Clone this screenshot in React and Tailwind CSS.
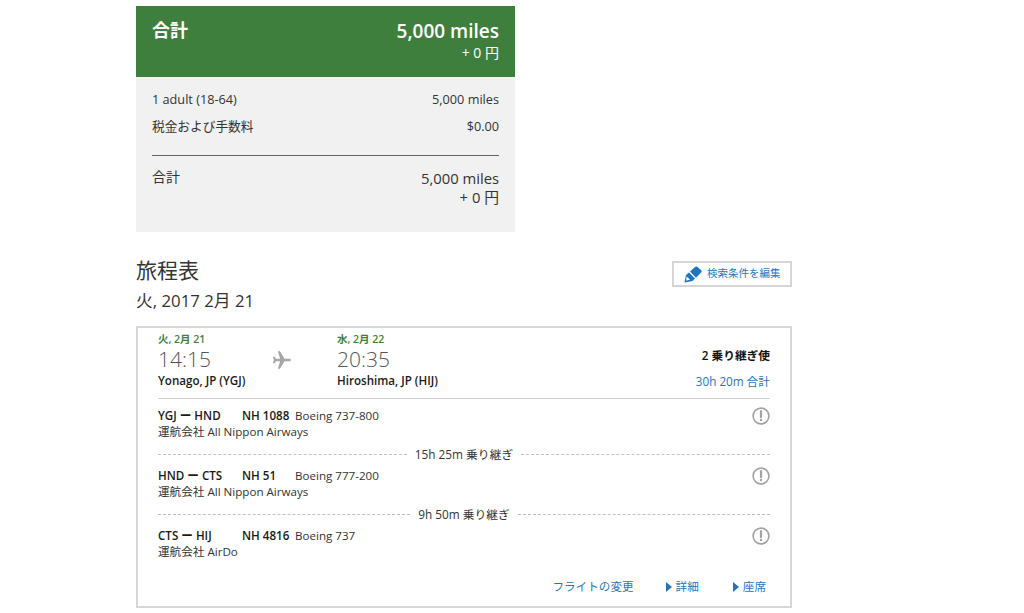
function Warn() {
  return (
    <svg width="18" height="18" viewBox="0 0 18 18" className="shrink-0">
      <circle cx="9" cy="9" r="7.9" fill="none" stroke="#a3a3a3" strokeWidth="1.6" />
      <path d="M9 4.2v6" stroke="#a3a3a3" strokeWidth="2.2" strokeLinecap="round" fill="none" />
      <circle cx="9" cy="13" r="1.2" fill="#a3a3a3" />
    </svg>
  );
}
function Segment({ route, flight, plane, op, className }) {
  return (
    <div className={"flex justify-between " + className}>
      <div className="text-[11.6px] leading-[17px] text-[#333]">
        <div className="flex">
          <span className="w-[84px] font-semibold text-[#1a1a1a]">{route}</span>
          <span className="w-[53px] font-semibold text-[#1a1a1a]">{flight}</span>
          <span>{plane}</span>
        </div>
        <div className="-mt-px">運航会社 {op}</div>
      </div>
      <Warn />
    </div>
  );
}
function Layover({ text, className }) {
  return (
    <div className={"flex items-center gap-2 text-[11.8px] leading-[16px] text-[#333] " + className}>
      <div className="flex-1 border-t border-dashed border-[#c0c0c0]" />
      <span>{text}</span>
      <div className="flex-1 border-t border-dashed border-[#c0c0c0]" />
    </div>
  );
}
function Tri() {
  return (
    <svg width="6" height="10" viewBox="0 0 6 10"><path d="M0 0l6 5-6 5z" fill="#1f76bd" /></svg>
  );
}
export default function App() {
  return (
    <div className="w-[1024px] h-[613px] overflow-hidden bg-white pl-[136px] pt-[6px] font-['Open_Sans','Noto_Sans_CJK_JP',sans-serif]">
      <div className="w-[379px] text-[#333]">
        <div className="flex h-[71px] justify-between bg-[#3f7f3d] px-4 pt-[12px] text-white">
          <div className="text-[18px] leading-[24px] font-semibold">合計</div>
          <div className="text-right">
            <div className="text-[19px] leading-[26px] font-semibold">5,000 miles</div>
            <div className="text-[14px] leading-[18px]">+ 0 円</div>
          </div>
        </div>
        <div className="h-[155px] bg-[#f1f1f1] px-4 pt-[14px]">
          <div className="flex justify-between text-[12.7px] leading-[17px]">
            <span>1 adult (18-64)</span><span>5,000 miles</span>
          </div>
          <div className="mt-[10px] flex justify-between text-[12.7px] leading-[17px]">
            <span>税金および手数料</span><span>$0.00</span>
          </div>
          <div className="mt-[20px] border-t border-[#666]" />
          <div className="mt-[12px] flex justify-between">
            <span className="text-[14px] leading-[17px]">合計</span>
            <div className="mt-px text-right text-[14.8px] leading-[19px]">
              <div>5,000 miles</div>
              <div>+ 0 円</div>
            </div>
          </div>
        </div>
      </div>

      <div className="w-[656px]">
        <div className="mt-[25px] flex items-start justify-between">
          <div className="text-[#333]">
            <div className="text-[21px] leading-[26px]">旅程表</div>
            <div className="mt-[6px] text-[16.8px] leading-[24px]">火, 2017 2月 21</div>
          </div>
          <div className="mt-[4px] flex h-[26px] w-[120px] items-center gap-[5px] border-2 border-[#d6d6d6] pl-[10px] text-[10.5px] text-[#1f76bd]">
            <svg width="18" height="17" viewBox="0 0 18 17">
              <path d="M6 5.5 11 1a2 2 0 0 1 2.6-.1l3.4 3a2 2 0 0 1 .1 2.7L12 11.8z" fill="#1f76bd" />
              <path d="M5 6.500l6 6-2.500 2.500L1 16.500l-.5-.5L2 9z" fill="#1f76bd" />
              <path d="M2.500 10.500l3.500 3-3.800 1.200z" fill="#fff" />
            </svg>
            <span>検索条件を編集</span>
          </div>
        </div>

        <div className="mt-[13px] h-[282px] border-2 border-[#d6d6d6] px-5 pt-[4px]">
          <div className="flex h-[67px] items-start justify-between border-b border-[#cfcfcf]">
            <div className="flex">
              <div className="w-[114px]">
                <div className="text-[10.5px] leading-[14px] font-semibold text-[#3f7f3d]">火, 2月 21</div>
                <div className="text-[21px] leading-[27px] font-light text-[#555]">14:15</div>
                <div className="-mt-px text-[11.6px] leading-[17px] font-semibold text-[#1a1a1a]">Yonago, JP (YGJ)</div>
              </div>
              <svg width="20" height="20" viewBox="0 0 24 24" className="mt-[18px] mr-[45px]">
                <path d="M21 10.500h-6L9.500 1.500H7l2.700 9H5L2.700 8H1l1.300 4L1 16h1.700L5 13.500h4.700l-2.700 9h2.500l5.500-9h6a1.500 1.500 0 0 0 0-3z" fill="#a6a6a6" />
              </svg>
              <div>
                <div className="text-[10.5px] leading-[14px] font-semibold text-[#3f7f3d]">水, 2月 22</div>
                <div className="text-[21px] leading-[27px] font-light text-[#555]">20:35</div>
                <div className="-mt-px text-[11.6px] leading-[17px] font-semibold text-[#1a1a1a]">Hiroshima, JP (HIJ)</div>
              </div>
            </div>
            <div className="pt-[15px] text-right text-[11.7px]">
              <div className="leading-[17px] font-semibold text-[#111]">2 乗り継ぎ使</div>
              <div className="mt-[9px] leading-[17px] text-[#1f76bd]">30h 20m 合計</div>
            </div>
          </div>
          <Segment className="mt-[8px]" route="YGJ ー HND" flight="NH 1088" plane="Boeing 737-800" op="All Nippon Airways" />
          <Layover className="mt-[6px]" text="15h 25m 乗り継ぎ" />
          <Segment className="mt-[5px]" route="HND ー CTS" flight="NH 51" plane="Boeing 777-200" op="All Nippon Airways" />
          <Layover className="mt-[6px]" text="9h 50m 乗り継ぎ" />
          <Segment className="mt-[5px]" route="CTS ー HIJ" flight="NH 4816" plane="Boeing 737" op="AirDo" />
          <div className="mt-[18px] flex justify-end text-[11.6px] leading-[17px] text-[#1f76bd]">
            <span>フライトの変更</span>
            <span className="ml-[32px] flex items-center gap-[4px]"><Tri />詳細</span>
            <span className="ml-[34px] mr-[4px] flex items-center gap-[4px]"><Tri />座席</span>
          </div>
        </div>
      </div>
    </div>
  );
}
